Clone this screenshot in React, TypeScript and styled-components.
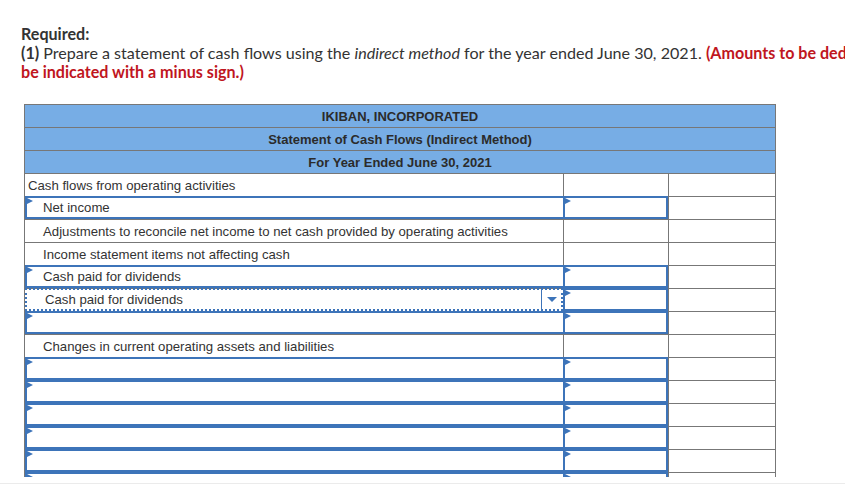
import React from "react";
import styled, { createGlobalStyle } from "styled-components";

const Global = createGlobalStyle`
  html, body { margin: 0; padding: 0; background: #fff; }
  body { overflow: hidden; }
`;

const Page = styled.div`
  width: 845px;
  height: 490px;
  overflow: hidden;
  background: #fff;
`;

const Instructions = styled.div`
  width: 920px;
  padding: 24px 0 0 21px;
  font-family: Lato, "Open Sans", Arial, sans-serif;
  font-size: 16.1px;
  line-height: 19px;
  color: #333;
`;

const Strong = styled.span`
  font-weight: 700;
`;

const Red = styled.span`
  font-weight: 700;
  color: #c0161e;
`;

const Em = styled.em`
  font-style: italic;
`;

const TableArea = styled.div`
  margin: 23px 0 0 24px;
  height: 373px;
  overflow: hidden;
`;

const Table = styled.table`
  border-collapse: collapse;
  table-layout: fixed;
  width: 752px;
  font-family: "Liberation Sans", Arial, sans-serif;
  font-size: 13.2px;
  color: #333;
`;

const HeadCell = styled.td`
  background: #77ade5;
  border: 1px solid #777;
  height: 22px;
  padding: 0;
  text-align: center;
  font-weight: 700;
  font-size: 13px;
  color: #2b2b2b;
`;

const Cell = styled.td<{ $indent?: boolean }>`
  border: 1px solid #777;
  height: 22px;
  padding: 0 0 0 ${(p) => (p.$indent ? 18 : 3)}px;
  white-space: nowrap;
  overflow: hidden;
  vertical-align: middle;
`;

const BoxCell = styled.td`
  border: 1px solid #777;
  height: 22px;
  padding: 0;
  vertical-align: top;
`;

const InputBox = styled.div<{ $wide?: boolean }>`
  position: relative;
  box-sizing: border-box;
  height: 23px;
  margin: -1px 0 -1px ${(p) => (p.$wide ? "0" : "-1px")};
  border: 2px solid #3d74b9;
  ${(p) => (p.$wide ? "border-right: none;" : "")}
  display: flex;
  align-items: center;
  padding-left: ${(p) => (p.$wide ? "16px" : "4px")};
  white-space: nowrap;
  &::before {
    content: "";
    position: absolute;
    left: 0;
    top: 0;
    border-left: 6px solid #3d74b9;
    border-top: 3.5px solid transparent;
    border-bottom: 3.5px solid transparent;
  }
`;

const SelectBox = styled.div`
  position: relative;
  box-sizing: border-box;
  height: 23px;
  margin: -1px 0 -1px 0;
  border: 2px dotted #3d74b9;
  display: flex;
  align-items: center;
  padding-left: 18px;
  white-space: nowrap;
`;

const SelectText = styled.span`
  flex: 1;
`;

const Caret = styled.div`
  width: 19px;
  height: 100%;
  border-left: 1px solid #3d74b9;
  display: flex;
  align-items: center;
  justify-content: center;
  &::after {
    content: "";
    border-top: 5px solid #3d74b9;
    border-left: 5px solid transparent;
    border-right: 5px solid transparent;
  }
`;

const BottomRule = styled.div`
  margin-top: 6px;
  border-top: 1px solid #ebebeb;
`;

type Row = {
  label?: string;
  kind: "plain" | "input" | "select";
  indent?: boolean;
  amount: boolean;
};

const rows: Row[] = [
  { label: "Cash flows from operating activities", kind: "plain", amount: false },
  { label: "Net income", kind: "input", amount: true },
  {
    label: "Adjustments to reconcile net income to net cash provided by operating activities",
    kind: "plain",
    indent: true,
    amount: false,
  },
  { label: "Income statement items not affecting cash", kind: "plain", indent: true, amount: false },
  { label: "Cash paid for dividends", kind: "input", amount: true },
  { label: "Cash paid for dividends", kind: "select", amount: true },
  { label: "", kind: "input", amount: true },
  { label: "Changes in current operating assets and liabilities", kind: "plain", indent: true, amount: false },
  { label: "", kind: "input", amount: true },
  { label: "", kind: "input", amount: true },
  { label: "", kind: "input", amount: true },
  { label: "", kind: "input", amount: true },
  { label: "", kind: "input", amount: true },
  { label: "", kind: "input", amount: true },
];

function LabelCell({ row }: { row: Row }) {
  if (row.kind === "input")
    return (
      <BoxCell>
        <InputBox $wide>{row.label}</InputBox>
      </BoxCell>
    );
  if (row.kind === "select")
    return (
      <BoxCell>
        <SelectBox>
          <SelectText>{row.label}</SelectText>
          <Caret />
        </SelectBox>
      </BoxCell>
    );
  return <Cell $indent={row.indent}>{row.label}</Cell>;
}

export default function App() {
  return (
    <Page>
      <Global />
      <Instructions>
        <Strong>Required:</Strong>
        <br />
        <Strong>(1)</Strong> Prepare a statement of cash flows using the <Em>indirect method</Em> for the year
        ended June 30, 2021. <Red>(Amounts to be deducted should</Red>
        <br />
        <Red>be indicated with a minus sign.)</Red>
      </Instructions>
      <TableArea>
        <Table>
          <colgroup>
            <col style={{ width: 539 }} />
            <col style={{ width: 105 }} />
            <col style={{ width: 107 }} />
          </colgroup>
          <tbody>
            <tr>
              <HeadCell colSpan={3}>IKIBAN, INCORPORATED</HeadCell>
            </tr>
            <tr>
              <HeadCell colSpan={3}>Statement of Cash Flows (Indirect Method)</HeadCell>
            </tr>
            <tr>
              <HeadCell colSpan={3}>For Year Ended June 30, 2021</HeadCell>
            </tr>
            {rows.map((row, i) => (
              <tr key={i}>
                <LabelCell row={row} />
                {row.amount ? (
                  <BoxCell>
                    <InputBox />
                  </BoxCell>
                ) : (
                  <Cell />
                )}
                <Cell />
              </tr>
            ))}
          </tbody>
        </Table>
      </TableArea>
      <BottomRule />
    </Page>
  );
}
